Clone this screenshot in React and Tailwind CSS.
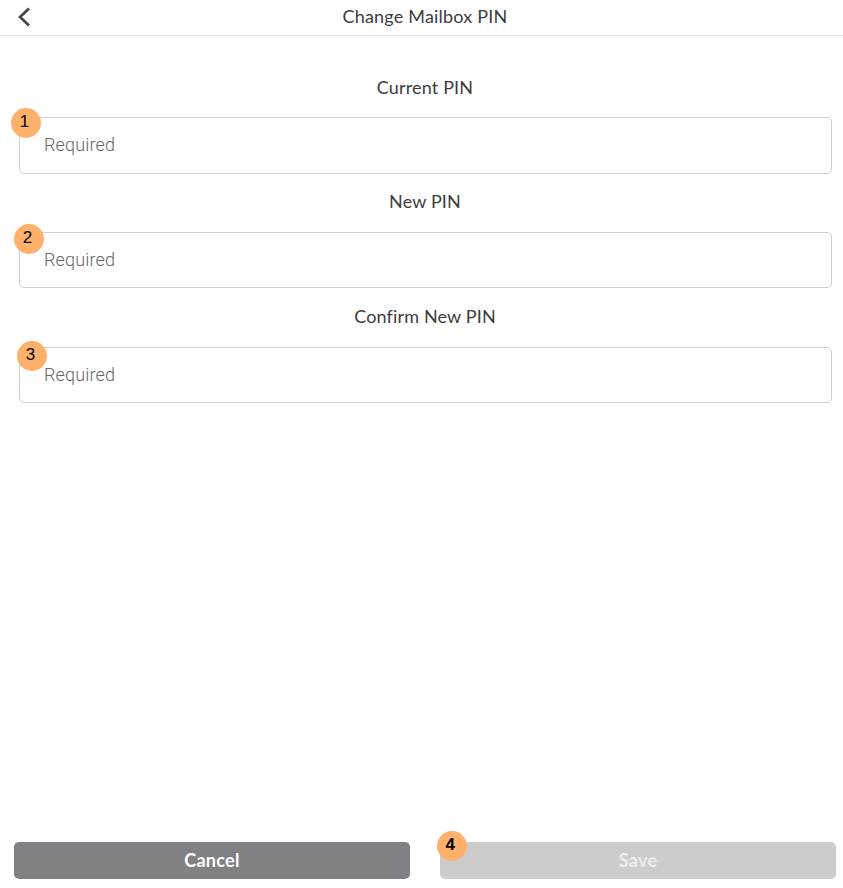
function Badge({ n, className }) {
  return (
    <span className={"absolute flex h-[30px] w-[30px] items-center justify-center rounded-full bg-[#ffb06a] pb-[3px] pr-[3px] font-['Liberation_Sans',sans-serif] text-[17px] text-black " + className}>
      {n}
    </span>
  );
}
function Field({ label, n, badge, fieldClass, inputClass }) {
  return (
    <div className={fieldClass}>
      <div className="pb-[2px] text-center text-[18px] leading-[22px] tracking-[0.15px] text-[#3c3c3c]">{label}</div>
      <div className={"relative ml-[19px] mr-[18px] flex items-center rounded-[5px] border border-[#cfcfcf] bg-white pb-[2px] pl-[24px] font-['Roboto',sans-serif] text-[18px] font-light tracking-[0.15px] text-[#6a6662] " + inputClass}>
        Required
        <Badge n={n} className={badge} />
      </div>
    </div>
  );
}
export default function App() {
  return (
    <div className="h-[888px] overflow-hidden">
      <div className="flex h-[888px] w-[850px] flex-col bg-white font-['Lato','Noto_Sans',sans-serif]">
        <header className="relative flex h-[36px] items-center justify-center border-b border-[#e6e6e6] pb-[3px] text-[18px] tracking-[0.2px] text-[#3c3c3c]">
          <svg className="absolute left-[17px] top-[7px]" width="14" height="20" viewBox="0 0 14 20" fill="none" stroke="#444" strokeWidth="2.6">
            <path d="M12 1.5 L3 10 L12 18.5" />
          </svg>
          Change Mailbox PIN
        </header>
        <main className="flex flex-1 flex-col pt-[40px]">
          <Field label="Current PIN" n="1" badge="left-[-9px] top-[-10px]" inputClass="mt-[17px] h-[57px]" />
          <Field label="New PIN" n="2" badge="left-[-6px] top-[-9px]" fieldClass="mt-[16px]" inputClass="mt-[18px] h-[56px]" />
          <Field label="Confirm New PIN" n="3" badge="left-[-3px] top-[-7px]" fieldClass="mt-[17px]" inputClass="mt-[18px] h-[56px]" />
        </main>
        <footer className="flex gap-[30px] px-[14px] pb-[9px]">
          <button className="h-[37px] flex-1 rounded-[5px] bg-[#808184] pb-[1px] text-[18px] font-bold tracking-[0.3px] text-white">Cancel</button>
          <button className="relative h-[37px] flex-1 rounded-[5px] bg-[#cccccc] pb-[1px] text-[18px] font-bold tracking-[0.3px] text-[#ececec]">
            Save
            <Badge n="4" className="left-[-3px] top-[-11px]" />
          </button>
        </footer>
      </div>
    </div>
  );
}
